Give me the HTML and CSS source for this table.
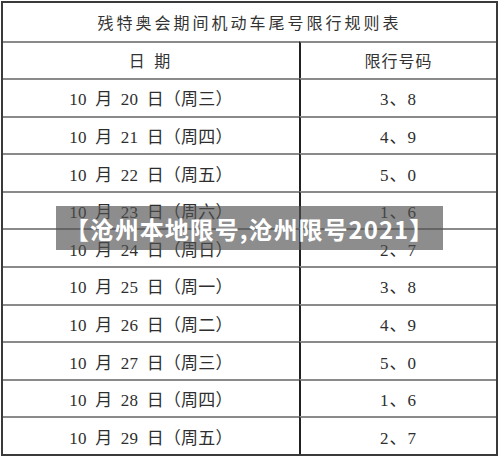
FILE: index.html
```html
<!DOCTYPE html>
<html lang="zh">
<head>
<meta charset="utf-8">
<title>沧州限号</title>
<link rel="stylesheet" href="styles.css">
</head>
<body>
<div class="page">
  <div class="sheet">
    <div class="cell title">残特奥会期间机动车尾号限行规则表</div>
    <div class="cell head">日&nbsp;期</div>
    <div class="cell head right">限行号码</div>
    <div class="cell">10 月 20 日（周三）</div><div class="cell right">3、8</div>
    <div class="cell">10 月 21 日（周四）</div><div class="cell right">4、9</div>
    <div class="cell">10 月 22 日（周五）</div><div class="cell right">5、0</div>
    <div class="cell">10 月 23 日（周六）</div><div class="cell right">1、6</div>
    <div class="cell">10 月 24 日（周日）</div><div class="cell right">2、7</div>
    <div class="cell">10 月 25 日（周一）</div><div class="cell right">3、8</div>
    <div class="cell">10 月 26 日（周二）</div><div class="cell right">4、9</div>
    <div class="cell">10 月 27 日（周三）</div><div class="cell right">5、0</div>
    <div class="cell">10 月 28 日（周四）</div><div class="cell right">1、6</div>
    <div class="cell">10 月 29 日（周五）</div><div class="cell right">2、7</div>
  </div>
  <div class="banner">【沧州本地限号,沧州限号2021】</div>
</div>
</body>
</html>
```

FILE: styles.css
```css
html, body {
  margin: 0;
  padding: 0;
  background: #ffffff;
}
.page {
  position: relative;
  width: 500px;
  height: 456px;
  padding: 1px 0 0 1px;
  box-sizing: border-box;
}
.sheet {
  width: 497px;
  height: 455px;
  box-sizing: border-box;
  border: 2px solid #3a3a3a;
  display: grid;
  grid-template-columns: 296px 1fr;
  grid-template-rows: repeat(12, 1fr);
  font-family: "Liberation Serif", "Noto Sans CJK SC", serif;
  font-size: 17px;
  color: #2e2e2e;
}
.cell {
  display: flex;
  align-items: center;
  justify-content: center;
  border-top: 2px solid #8a8a8a;
  word-spacing: 4px;
  letter-spacing: 0.2px;
}
.cell.date {
  padding-right: 6px;
}
.cell.title {
  grid-column: 1 / 3;
  border-top: none;
  letter-spacing: 3px;
  word-spacing: 0;
  font-family: "Noto Sans CJK SC", sans-serif;
  font-size: 16px;
  color: #333;
}
.cell.head {
  font-family: "Noto Sans CJK SC", sans-serif;
  font-size: 16px;
  letter-spacing: 3px;
  word-spacing: 0;
  color: #333;
}
.cell.right {
  border-left: 2px solid #222;
  word-spacing: 0;
  letter-spacing: 1px;
}
.banner {
  position: absolute;
  left: 56px;
  top: 206px;
  width: 387px;
  height: 44px;
  background: rgba(80, 80, 80, 0.65);
  color: #ffffff;
  font-family: "Noto Sans CJK SC", sans-serif;
  font-weight: 700;
  font-size: 24px;
  letter-spacing: 1px;
  display: flex;
  align-items: center;
  justify-content: center;
}
```
